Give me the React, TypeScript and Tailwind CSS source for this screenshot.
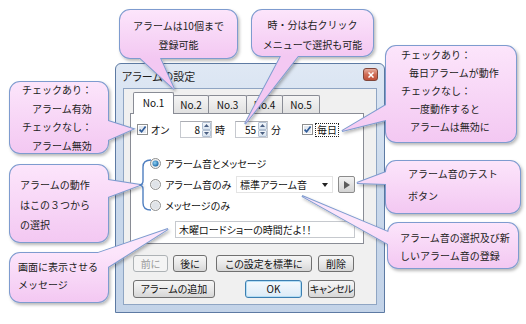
import React from "react";

type Pt = [number, number];
interface Co { x: number; y: number; w: number; h: number; a: Pt; b: Pt; tip: Pt }

const callouts: Co[] = [
  { x: 120, y: 10, w: 117, h: 48, a: [140, 58], b: [160, 58], tip: [174, 89] },
  { x: 252, y: 10, w: 121, h: 46, a: [281, 56], b: [298, 56], tip: [245, 124] },
  { x: 386, y: 46, w: 130, h: 96, a: [386, 105], b: [386, 120], tip: [342, 131] },
  { x: 386, y: 161, w: 134, h: 52, a: [386, 172], b: [386, 184], tip: [357, 183] },
  { x: 388, y: 223, w: 130, h: 45, a: [388, 232], b: [388, 244], tip: [302, 196] },
  { x: 10, y: 82, w: 98, h: 71, a: [108, 121], b: [108, 140], tip: [133, 129] },
  { x: 10, y: 165, w: 98, h: 77, a: [108, 180], b: [108, 197], tip: [140, 185] },
  { x: 10, y: 253, w: 98, h: 49, a: [98, 253], b: [108, 267], tip: [168, 229] },
];

function ext(p: Pt, tip: Pt, d = 8): Pt {
  const dx = p[0] - tip[0];
  const dy = p[1] - tip[1];
  const l = Math.hypot(dx, dy);
  return [p[0] + (dx / l) * d, p[1] + (dy / l) * d];
}

const STROKE = "#7e9bcf";

function CalloutShapes() {
  return (
    <svg className="absolute left-0 top-0 pointer-events-none" width={526} height={324}>
      <defs>
        <filter id="sh" x="-20%" y="-20%" width="140%" height="140%">
          <feDropShadow dx="1.5" dy="2" stdDeviation="1.4" floodColor="#000" floodOpacity="0.28" />
        </filter>
        {callouts.map((c, i) => (
          <linearGradient key={i} id={`cg${i}`} gradientUnits="userSpaceOnUse" x1="0" y1={c.y} x2="0" y2={c.y + c.h}>
            <stop offset="0" stopColor="#fce5fb" />
            <stop offset="1" stopColor="#f3c8f2" />
          </linearGradient>
        ))}
      </defs>
      {callouts.map((c, i) => {
        const pa = ext(c.a, c.tip);
        const pb = ext(c.b, c.tip);
        const pts = `${pa[0]},${pa[1]} ${c.tip[0]},${c.tip[1]} ${pb[0]},${pb[1]}`;
        return (
          <g key={i} filter="url(#sh)">
            <rect x={c.x} y={c.y} width={c.w} height={c.h} rx={10} fill="none" stroke={STROKE} strokeWidth={2} />
            <polygon points={pts} fill="none" stroke={STROKE} strokeWidth={2} />
            <rect x={c.x} y={c.y} width={c.w} height={c.h} rx={10} fill={`url(#cg${i})`} />
            <polygon points={pts} fill={`url(#cg${i})`} />
          </g>
        );
      })}
      <path
        d="M151 160 Q143 160 143 167 L143 181 Q143 184.5 139.5 185 Q143 185.5 143 189 L143 203 Q143 210 151 210"
        fill="none"
        stroke="#4f7fc0"
        strokeWidth={1.4}
      />
    </svg>
  );
}

const CT = "absolute [font-family:'Noto_Sans_CJK_JP',sans-serif] text-[10px] text-[#222] whitespace-nowrap";

function CalloutTexts() {
  return (
    <>
      <div className={`${CT} left-[120px] top-[16px] w-[117px] text-center leading-[19px]`}>
        <div>アラームは10個まで</div>
        <div>登録可能</div>
      </div>
      <div className={`${CT} left-[252px] top-[15px] w-[121px] text-center leading-[20px]`}>
        <div>時・分は右クリック</div>
        <div>メニューで選択も可能</div>
      </div>
      <div className={`${CT} left-[401px] top-[46px] leading-[18px]`}>
        <div>チェックあり：</div>
        <div className="pl-[8px]">毎日アラームが動作</div>
        <div>チェックなし：</div>
        <div className="pl-[9px]">一度動作すると</div>
        <div className="pl-[9px]">アラームは無効に</div>
      </div>
      <div className={`${CT} left-[408px] top-[163px] leading-[22px]`}>
        <div>アラーム音のテスト</div>
        <div>ボタン</div>
      </div>
      <div className={`${CT} left-[400px] top-[229px] leading-[18px]`}>
        <div>アラーム音の選択及び新</div>
        <div>しいアラーム音の登録</div>
      </div>
      <div className={`${CT} left-[22px] top-[81px] leading-[18.5px]`}>
        <div>チェックあり：</div>
        <div className="pl-[10px]">アラーム有効</div>
        <div>チェックなし：</div>
        <div className="pl-[10px]">アラーム無効</div>
      </div>
      <div className={`${CT} left-[20px] top-[175px] leading-[20px]`}>
        <div>アラームの動作</div>
        <div>はこの３つから</div>
        <div>の選択</div>
      </div>
      <div className={`${CT} left-[18px] top-[258px] leading-[18px]`}>
        <div>画面に表示させる</div>
        <div>メッセージ</div>
      </div>
    </>
  );
}

function CheckBox() {
  return (
    <svg width={11} height={11} className="shrink-0">
      <rect x={0.5} y={0.5} width={10} height={10} fill="#fff" stroke="#8e8f8f" />
      <rect x={2} y={2} width={7} height={7} fill="#e4e9f0" />
      <path d="M2.6 5.6 L4.6 7.8 L8.6 2.6" fill="none" stroke="#2f5b98" strokeWidth={1.7} />
    </svg>
  );
}

function Radio({ on, id }: { on?: boolean; id: string }) {
  return (
    <svg width={11} height={11} className="shrink-0">
      <defs>
        <radialGradient id={id} cx="0.4" cy="0.4" r="0.6">
          <stop offset="0" stopColor="#8fd3f5" />
          <stop offset="1" stopColor="#1d6aa8" />
        </radialGradient>
      </defs>
      <circle cx={5.5} cy={5.5} r={5} fill="#f2f2f2" stroke="#8e8f8f" />
      <circle cx={5.5} cy={5.5} r={3.6} fill="#dfe3e8" />
      {on && <circle cx={5.5} cy={5.5} r={3} fill={`url(#${id})`} />}
    </svg>
  );
}

function SpinHalf({ up }: { up?: boolean }) {
  return (
    <div className="flex-1 flex items-center justify-center bg-gradient-to-b from-[#f3f7fb] to-[#d8e3ef] border border-[#b3c1d3] rounded-[1px]">
      <svg width={5} height={3}>
        <polygon points={up ? "0,3 2.5,0 5,3" : "0,0 2.5,3 5,0"} fill="#4a5f82" />
      </svg>
    </div>
  );
}

function Spin({ value, w }: { value: string; w: string }) {
  return (
    <div className={`${w} h-[17px] flex border border-[#c6c9cf] border-t-[#abadb3] bg-white shrink-0`}>
      <div className="flex-1 flex items-center justify-end pr-[2px] text-[10px] leading-none">{value}</div>
      <div className="w-[9px] flex flex-col">
        <SpinHalf up />
        <SpinHalf />
      </div>
    </div>
  );
}

const BTN =
  "h-full flex items-center justify-center rounded-[3px] border text-[10px] leading-none shrink-0 whitespace-nowrap";
const BTN_N = "border-[#707070] bg-gradient-to-b from-[#f6f6f6] via-[#e9e9e9] to-[#d6d6d6] text-[#111]";

function Dialog() {
  return (
    <div className="w-[270px] h-[250px] rounded-t-[6px] border border-[#5d7aa3] bg-gradient-to-b from-[#dfe8f4] via-[#cad9ec] to-[#c3d3e8] flex flex-col [font-family:'Noto_Sans_CJK_JP',sans-serif] [font-feature-settings:'palt'] text-[#111]">
      {/* title bar */}
      <div className="h-[24px] shrink-0 flex items-start pl-[6px] pr-[6px]">
        <div className="h-full flex items-center text-[11px] leading-none text-[#1e1e1e]">アラームの設定</div>
        <div className="ml-auto mt-[4px] w-[15px] h-[13px] rounded-[3px] border border-[#80463a] bg-gradient-to-b from-[#e6ad9f] via-[#cf6c55] to-[#bf5039] flex items-center justify-center">
          <svg width={6} height={6}>
            <path d="M0.5 0.5 L5.5 5.5 M5.5 0.5 L0.5 5.5" stroke="#fff" strokeWidth={1.5} />
          </svg>
        </div>
      </div>
      {/* client */}
      <div className="mx-[7px] mb-[7px] flex-1 border border-[#8fa5c3] bg-[#f0f0f0] flex flex-col">
        {/* tab control */}
        <div className="ml-[6px] mt-[3px] w-[234px] flex flex-col">
          <div className="h-[21px] flex items-end pl-[3px] text-[10px] leading-none">
            <div className="relative z-10 w-[41px] h-[22px] -mb-px bg-white border border-b-0 border-[#898c95] rounded-t-[2px] flex items-center justify-center pb-[2px]">
              No.1
            </div>
            <div className="-ml-px w-[36px] h-[18px] border border-b-0 border-[#898c95] rounded-t-[2px] bg-gradient-to-b from-[#f5f5f5] to-[#e1e1e1] flex items-center justify-center">
              No.2
            </div>
            <div className="-ml-px w-[39px] h-[18px] border border-b-0 border-[#898c95] rounded-t-[2px] bg-gradient-to-b from-[#f5f5f5] to-[#e1e1e1] flex items-center justify-center">
              No.3
            </div>
            <div className="-ml-px w-[37px] h-[18px] border border-b-0 border-[#898c95] rounded-t-[2px] bg-gradient-to-b from-[#f5f5f5] to-[#e1e1e1] flex items-center justify-center">
              No.4
            </div>
            <div className="-ml-px w-[38px] h-[18px] border border-b-0 border-[#898c95] rounded-t-[2px] bg-gradient-to-b from-[#f5f5f5] to-[#e1e1e1] flex items-center justify-center">
              No.5
            </div>
          </div>
          <div className="h-[131px] border border-[#898c95] bg-white flex flex-col text-[10px] leading-none">
            {/* row 1 */}
            <div className="mt-[7px] h-[17px] flex items-center pl-[6px]">
              <CheckBox />
              <span className="ml-[3px] w-[29px]">オン</span>
              <Spin value="8" w="w-[32px]" />
              <span className="ml-[3px] w-[20px]">時</span>
              <Spin value="55" w="w-[33px]" />
              <span className="ml-[3px] w-[31px]">分</span>
              <CheckBox />
              <span className="ml-[2px] h-[14px] px-[1px] flex items-center border border-dotted border-[#222]">毎日</span>
            </div>
            {/* radio a */}
            <div className="mt-[17px] h-[17px] flex items-center pl-[19px]">
              <Radio on id="r1" />
              <span className="ml-[4px]">アラーム音とメッセージ</span>
            </div>
            {/* radio b */}
            <div className="mt-[4px] h-[17px] flex items-center pl-[19px]">
              <Radio id="r2" />
              <span className="ml-[4px] w-[71px]">アラーム音のみ</span>
              <div className="w-[97px] h-[17px] flex items-center pl-[3px] pr-[4px] border border-[#e4e4e4] bg-white">
                <span>標準アラーム音</span>
                <svg width={6} height={4} className="ml-auto">
                  <polygon points="0,0 6,0 3,4" fill="#222" />
                </svg>
              </div>
              <div className="ml-[5px] w-[17px] h-[17px] rounded-[2px] border border-[#8c8c8c] bg-gradient-to-b from-[#f3f3f3] to-[#d3d3d3] flex items-center justify-center">
                <svg width={6} height={8}>
                  <polygon points="0,0 6,4 0,8" fill="#5c5c5c" />
                </svg>
              </div>
            </div>
            {/* radio c */}
            <div className="mt-[4px] h-[17px] flex items-center pl-[19px]">
              <Radio id="r3" />
              <span className="ml-[4px]">メッセージのみ</span>
            </div>
            {/* message */}
            <div className="mt-[7px] ml-[44px] w-[180px] h-[17px] flex items-center pl-[3px] border border-[#c6c9ce] bg-white">
              木曜ロードショーの時間だよ！！
            </div>
          </div>
        </div>
        {/* buttons row 1 */}
        <div className="mt-[11px] ml-[9px] h-[17px] flex">
          <div className={`${BTN} w-[35px] border-[#adb2b5] bg-[#f4f4f4] text-[#9a9a9a]`}>前に</div>
          <div className={`${BTN} ${BTN_N} ml-[5px] w-[34px]`}>後に</div>
          <div className={`${BTN} ${BTN_N} ml-[9px] w-[96px]`}>この設定を標準に</div>
          <div className={`${BTN} ${BTN_N} ml-[6px] w-[36px]`}>削除</div>
        </div>
        {/* buttons row 2 */}
        <div className="mt-[8px] ml-[9px] h-[18px] flex">
          <div className={`${BTN} ${BTN_N} w-[82px]`}>アラームの追加</div>
          <div className={`${BTN} ml-[30px] w-[57px] border-[#3c7fb1] bg-gradient-to-b from-[#f4f9fd] to-[#dcebf7] shadow-[inset_0_0_0_1px_#b4def5] text-[#111]`}>OK</div>
          <div className={`${BTN} ${BTN_N} ml-[6px] w-[47px] tracking-[-0.4px]`}>キャンセル</div>
        </div>
      </div>
    </div>
  );
}

export default function App() {
  return (
    <div className="relative w-[526px] h-[324px] bg-white overflow-hidden">
      <div className="pl-[115px] pt-[63px]">
        <Dialog />
      </div>
      <CalloutShapes />
      <CalloutTexts />
    </div>
  );
}
